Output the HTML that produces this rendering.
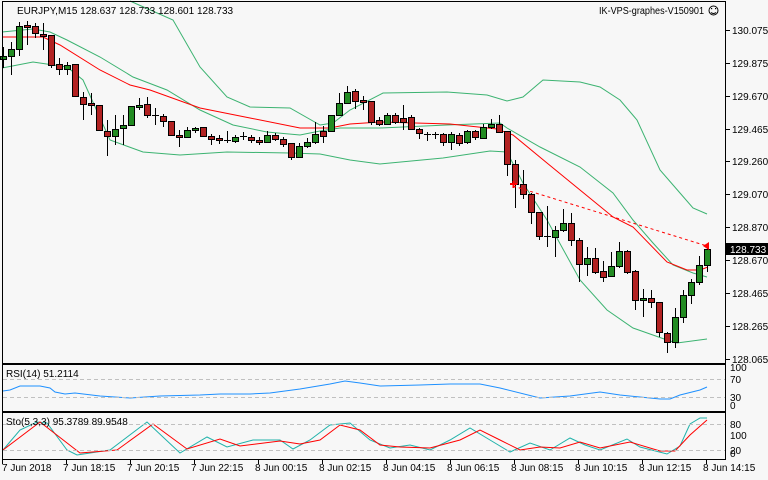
<!DOCTYPE html>
<html><head><meta charset="utf-8"><style>
html,body{margin:0;padding:0;background:#f7f7f7;}
svg{display:block;font-family:"Liberation Sans",sans-serif;font-size:10px;}
</style></head><body>
<svg id="s" width="768" height="480" xmlns="http://www.w3.org/2000/svg">
<rect width="768" height="480" fill="#f7f7f7"/>
<g id="g"></g>
<g stroke="#000" fill="none" shape-rendering="crispEdges">
<rect x="2.5" y="1.5" width="723" height="362"/>
<rect x="2.5" y="364.5" width="723" height="47"/>
<rect x="2.5" y="412.5" width="723" height="47"/>
</g>
<g stroke="#c0c0c0" stroke-dasharray="4,3" shape-rendering="crispEdges">
<line x1="3" y1="379.5" x2="725" y2="379.5"/><line x1="3" y1="397.5" x2="725" y2="397.5"/>
<line x1="3" y1="424.5" x2="725" y2="424.5"/><line x1="3" y1="450.5" x2="725" y2="450.5"/>
</g>
<text x="17" y="14">EURJPY,M15  128.637 128.733 128.601 128.733</text>
<text x="599" y="14" textLength="105" lengthAdjust="spacingAndGlyphs">IK-VPS-graphes-V150901</text>
<g fill="none" stroke="#000">
<circle cx="713.5" cy="10.5" r="4.5"/>
<path d="M711 12.5q2.5 2 5 0"/>
</g>
<rect x="711" y="8" width="1.2" height="1.2" fill="#000"/><rect x="715" y="8" width="1.2" height="1.2" fill="#000"/>
<g id="ax"></g>
<rect x="726" y="243" width="42" height="12" fill="#000"/>
<text x="730" y="253" fill="#fff">128.733</text>
<g fill="#000">
<text x="730" y="371">100</text><text x="730" y="383">70</text><text x="730" y="401">30</text><text x="730" y="409">0</text>
<text x="730" y="439">100</text><text x="730" y="428">80</text><text x="730" y="454">20</text><text x="730" y="457">0</text>
</g>
<text x="6" y="377">RSI(14) 51.2114</text>
<text x="6" y="425">Sto(5,3,3) 95.3789 89.9548</text>
</svg>
<script>
var NS="http://www.w3.org/2000/svg",g=document.getElementById('g'),ax=document.getElementById('ax');
function el(p,t,a,txt){var e=document.createElementNS(NS,t);for(var k in a)e.setAttribute(k,a[k]);if(txt)e.textContent=txt;p.appendChild(e);return e;}
function pl(pts,c,w,d){el(g,'polyline',{points:pts.map(function(p){return p.join(',')}).join(' '),fill:'none',stroke:c,'stroke-width':w||1,'stroke-dasharray':d||'none'});}
var C=[[59,56,47,68],[56,49,42,75],[49,26,22,56],[25,27,21,45],[26,33,23,38],[34,36,23,50],[35,65,35,68],[64,69,58,75],[69,65,62,75],[64,96,64,96],
[97,104,92,120],[103,105,93,115],[105,130,105,130],[131,136,120,156],[136,129,115,145],[128,125,115,145],[125,106,106,125],[107,105,98,110],[104,115,97,118],[115,116,108,125],
[116,121,114,127],[121,135,121,135],[135,137,130,147],[137,130,127,137],[130,128,127,133],[127,136,127,137],[136,139,134,145],[138,140,135,144],[140,141,131,143],[141,137,135,143],
[136,137,132,140],[137,140,135,143],[140,142,137,145],[142,135,131,142],[135,139,133,141],[139,144,137,147],[143,157,143,160],[157,146,143,157],[146,142,138,148],[142,134,122,144],
[131,136,126,143],[131,115,115,131],[115,103,93,115],[103,92,86,103],[91,101,89,109],[100,102,96,110],[101,122,101,125],[120,124,117,126],[124,115,113,125],[115,122,113,124],
[118,122,105,130],[117,129,115,130],[129,133,128,139],[134,135,132,141],[134,135,132,139],[134,142,133,146],[142,134,132,150],[135,143,133,146],[142,131,130,144],[131,137,130,140],
[138,127,124,139],[127,124,119,129],[124,132,115,133],[131,164,131,176],[164,184,160,208],[184,194,170,199],[194,212,193,224],[212,236,212,240],[236,237,206,247],[237,230,226,257],
[230,223,209,232],[223,240,213,246],[240,264,238,282],[264,258,247,276],[258,272,248,274],[271,277,261,282],[276,266,252,276],[266,251,242,268],[251,272,250,274],[271,300,270,310],
[300,298,289,317],[298,302,290,308],[302,332,302,337],[333,342,332,353],[342,317,308,348],[317,295,290,323],[295,282,279,304],[282,265,256,285],[265,249,247,272]];
pl([[2,68],[33,62],[67,67],[83,80],[110,140],[143,152],[180,155],[227,152],[290,153],[320,154],[350,160],[380,164],[443,158],[490,151],[507,152],[523,183],[547,220],[580,280],[607,310],[633,328],[667,340],[677,343],[707,339]],'#3cb371');
pl([[130,1],[173,20],[200,67],[227,97],[250,107],[290,108],[320,125],[333,123],[350,110],[383,93],[447,92],[487,95],[507,101],[523,97],[543,80],[580,82],[600,87],[620,100],[637,120],[660,170],[680,193],[693,208],[707,214]],'#3cb371');
pl([[2,32],[33,29],[50,32],[67,40],[100,57],[133,77],[167,90],[200,110],[233,125],[267,132],[300,135],[320,131],[340,128],[380,128],[447,125],[500,123],[507,128],[540,147],[580,167],[613,193],[633,220],[653,243],[673,265],[693,273],[707,277]],'#3cb371');
pl([[2,37],[43,37],[60,45],[100,70],[130,85],[150,90],[200,108],[250,118],[300,128],[330,128],[350,124],[380,122],[450,124],[497,129],[513,135],[547,163],[580,190],[613,217],[633,227],[667,262],[687,270],[700,270],[708,267]],'#ff0000');
C.forEach(function(c,i){var x=3+8*i,o=c[0],cl=c[1],h=c[2],l=c[3];var t=Math.min(o,cl),b=Math.max(o,cl);
el(g,'line',{x1:x+.5,x2:x+.5,y1:h,y2:l,stroke:'#000'});
if(b-t<1.5)el(g,'line',{x1:x-3,x2:x+4,y1:t+.5,y2:t+.5,stroke:'#000'});
else el(g,'rect',{x:x-2.5,y:t+.5,width:6,height:b-t,fill:cl<o?'#228b22':'#b22222',stroke:'#000'});});
pl([[513,186],[707,246]],'#ff0000',1,'3,3');
el(g,'path',{d:'M703 246 L709 242 L709 250 Z',fill:'#f00'});
el(g,'path',{d:'M510 184h7M513.5 181v7',stroke:'#f00','stroke-width':2});
pl([[3,391],[10,390],[20,386],[40,386],[50,388],[55,392],[65,394],[75,393],[100,396],[130,398],[160,396],[200,395],[220,394],[250,394],[270,393],[300,389],[330,384],[345,381],[360,383],[380,386],[420,385],[450,384],[480,384],[500,388],[540,398],[570,396],[600,392],[620,395],[640,397],[660,399],[670,399],[680,395],[700,390],[707,387]],'#1e90ff');
pl([[3,450],[20,430],[37,422],[47,423],[67,450],[77,455],[110,450],[147,422],[180,453],[207,437],[227,447],[253,440],[280,440],[293,449],[310,440],[330,425],[350,423],[370,440],[390,448],[410,445],[430,450],[450,440],[470,428],[490,440],[510,452],[530,443],[550,450],[570,438],[585,445],[600,450],[627,439],[640,447],[667,454],[680,446],[690,424],[700,418],[707,418]],'#20b2aa');
pl([[3,450],[40,422],[80,453],[117,450],[153,424],[187,449],[220,439],[240,446],[280,441],[300,444],[320,440],[340,425],[360,430],[380,445],[400,447],[430,448],[460,440],[480,430],[500,440],[520,450],[540,447],[560,448],[580,442],[600,448],[630,442],[660,451],[675,451],[690,435],[707,420]],'#ff0000');
var pr=[['130.075',30],['129.875',63],['129.670',96],['129.465',129],['129.260',161],['129.070',194],['128.870',227],['128.670',260],['128.465',293],['128.265',326],['128.065',359]];
pr.forEach(function(p){el(ax,'line',{x1:726,x2:730,y1:p[1]+.5,y2:p[1]+.5,stroke:'#000'});el(ax,'text',{x:732,y:p[1]+4},p[0]);});
var tl=['7 Jun 2018','7 Jun 18:15','7 Jun 20:15','7 Jun 22:15','8 Jun 00:15','8 Jun 02:15','8 Jun 04:15','8 Jun 06:15','8 Jun 08:15','8 Jun 10:15','8 Jun 12:15','8 Jun 14:15'];
tl.forEach(function(t,i){var x=2+64*i;el(ax,'line',{x1:x+.5,x2:x+.5,y1:460,y2:464,stroke:'#000'});el(ax,'text',{x:i==0?2:x-3,y:471},t);});
</script>
</body></html>
